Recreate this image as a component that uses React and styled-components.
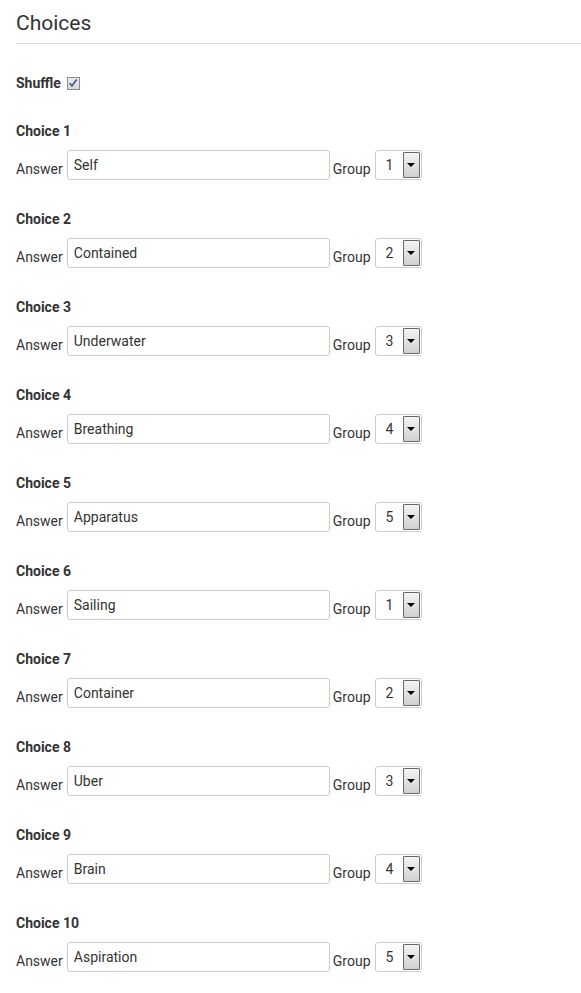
import React from 'react'
import styled, { createGlobalStyle } from 'styled-components'

const GlobalStyle = createGlobalStyle`
  body {
    margin: 0;
    background: #fff;
    font-family: Roboto, "Liberation Sans", Arial, sans-serif;
    color: #333;
  }
`

const Container = styled.div`
  padding-left: 16px;
`

const Title = styled.h2`
  margin: 0;
  padding-top: 11px;
  padding-bottom: 7px;
  font-size: 21px;
  line-height: 25px;
  font-weight: 400;
  color: #333;
  border-bottom: 1px solid #ddd;
`

const ShuffleRow = styled.div`
  display: flex;
  align-items: center;
  gap: 6px;
  margin-top: 30px;
  height: 18px;
  font-size: 14px;
  font-weight: 700;
`

const CheckBox = styled.span`
  display: inline-flex;
  align-items: center;
  justify-content: center;
  width: 11px;
  height: 11px;
  border: 1px solid #8c8c8c;
  background: linear-gradient(#ececec, #d6d6d6);
`

const ChoiceBlock = styled.div`
  margin-top: 30px;
`

const ChoiceTitle = styled.div`
  font-size: 14px;
  font-weight: 700;
  line-height: 18px;
  margin-bottom: 10px;
`

const Row = styled.div`
  display: flex;
  align-items: flex-end;
  height: 30px;
`

const Label = styled.span`
  font-size: 14px;
  line-height: 16px;
  padding-bottom: 3px;
  margin-right: 4px;
`

const TextInput = styled.input`
  box-sizing: border-box;
  width: 263px;
  height: 30px;
  margin: 0 3px 0 0;
  padding: 0 6px;
  border: 1px solid #ccc;
  border-radius: 3px;
  font-family: Roboto, "Liberation Sans", Arial, sans-serif;
  font-size: 14px;
  color: #333;
  background: #fff;
  outline: none;
`

const SelectBox = styled.div`
  box-sizing: border-box;
  display: flex;
  align-items: center;
  width: 47px;
  height: 30px;
  border: 1px solid #ccc;
  border-radius: 3px;
  padding: 1px 1px 1px 10px;
  font-size: 14px;
  color: #333;
`

const SelectValue = styled.span`
  flex: 1;
`

const ArrowButton = styled.span`
  box-sizing: border-box;
  display: flex;
  align-items: center;
  justify-content: center;
  width: 17px;
  height: 100%;
  border: 1px solid #6a6a6a;
  border-radius: 1px;
  background: linear-gradient(#f4f4f4, #cfcfcf);
`

const Triangle = styled.span`
  width: 0;
  height: 0;
  border-left: 4px solid transparent;
  border-right: 4px solid transparent;
  border-top: 4px solid #000;
`

const choices = [
  ['Self', 1],
  ['Contained', 2],
  ['Underwater', 3],
  ['Breathing', 4],
  ['Apparatus', 5],
  ['Sailing', 1],
  ['Container', 2],
  ['Uber', 3],
  ['Brain', 4],
  ['Aspiration', 5],
]

function App() {
  return (
    <Container>
      <GlobalStyle />
      <Title>Choices</Title>
      <ShuffleRow>
        Shuffle
        <CheckBox>
          <svg width="10" height="10" viewBox="0 0 10 10">
            <path d="M1.5 5.2 L4 7.8 L8.7 1.5" fill="none" stroke="#3d4f9f" strokeWidth="1.6" />
          </svg>
        </CheckBox>
      </ShuffleRow>
      {choices.map(([answer, group], i) => (
        <ChoiceBlock key={i}>
          <ChoiceTitle>Choice {i + 1}</ChoiceTitle>
          <Row>
            <Label>Answer</Label>
            <TextInput defaultValue={answer} />
            <Label>Group</Label>
            <SelectBox>
              <SelectValue>{group}</SelectValue>
              <ArrowButton>
                <Triangle />
              </ArrowButton>
            </SelectBox>
          </Row>
        </ChoiceBlock>
      ))}
    </Container>
  )
}

export default App
